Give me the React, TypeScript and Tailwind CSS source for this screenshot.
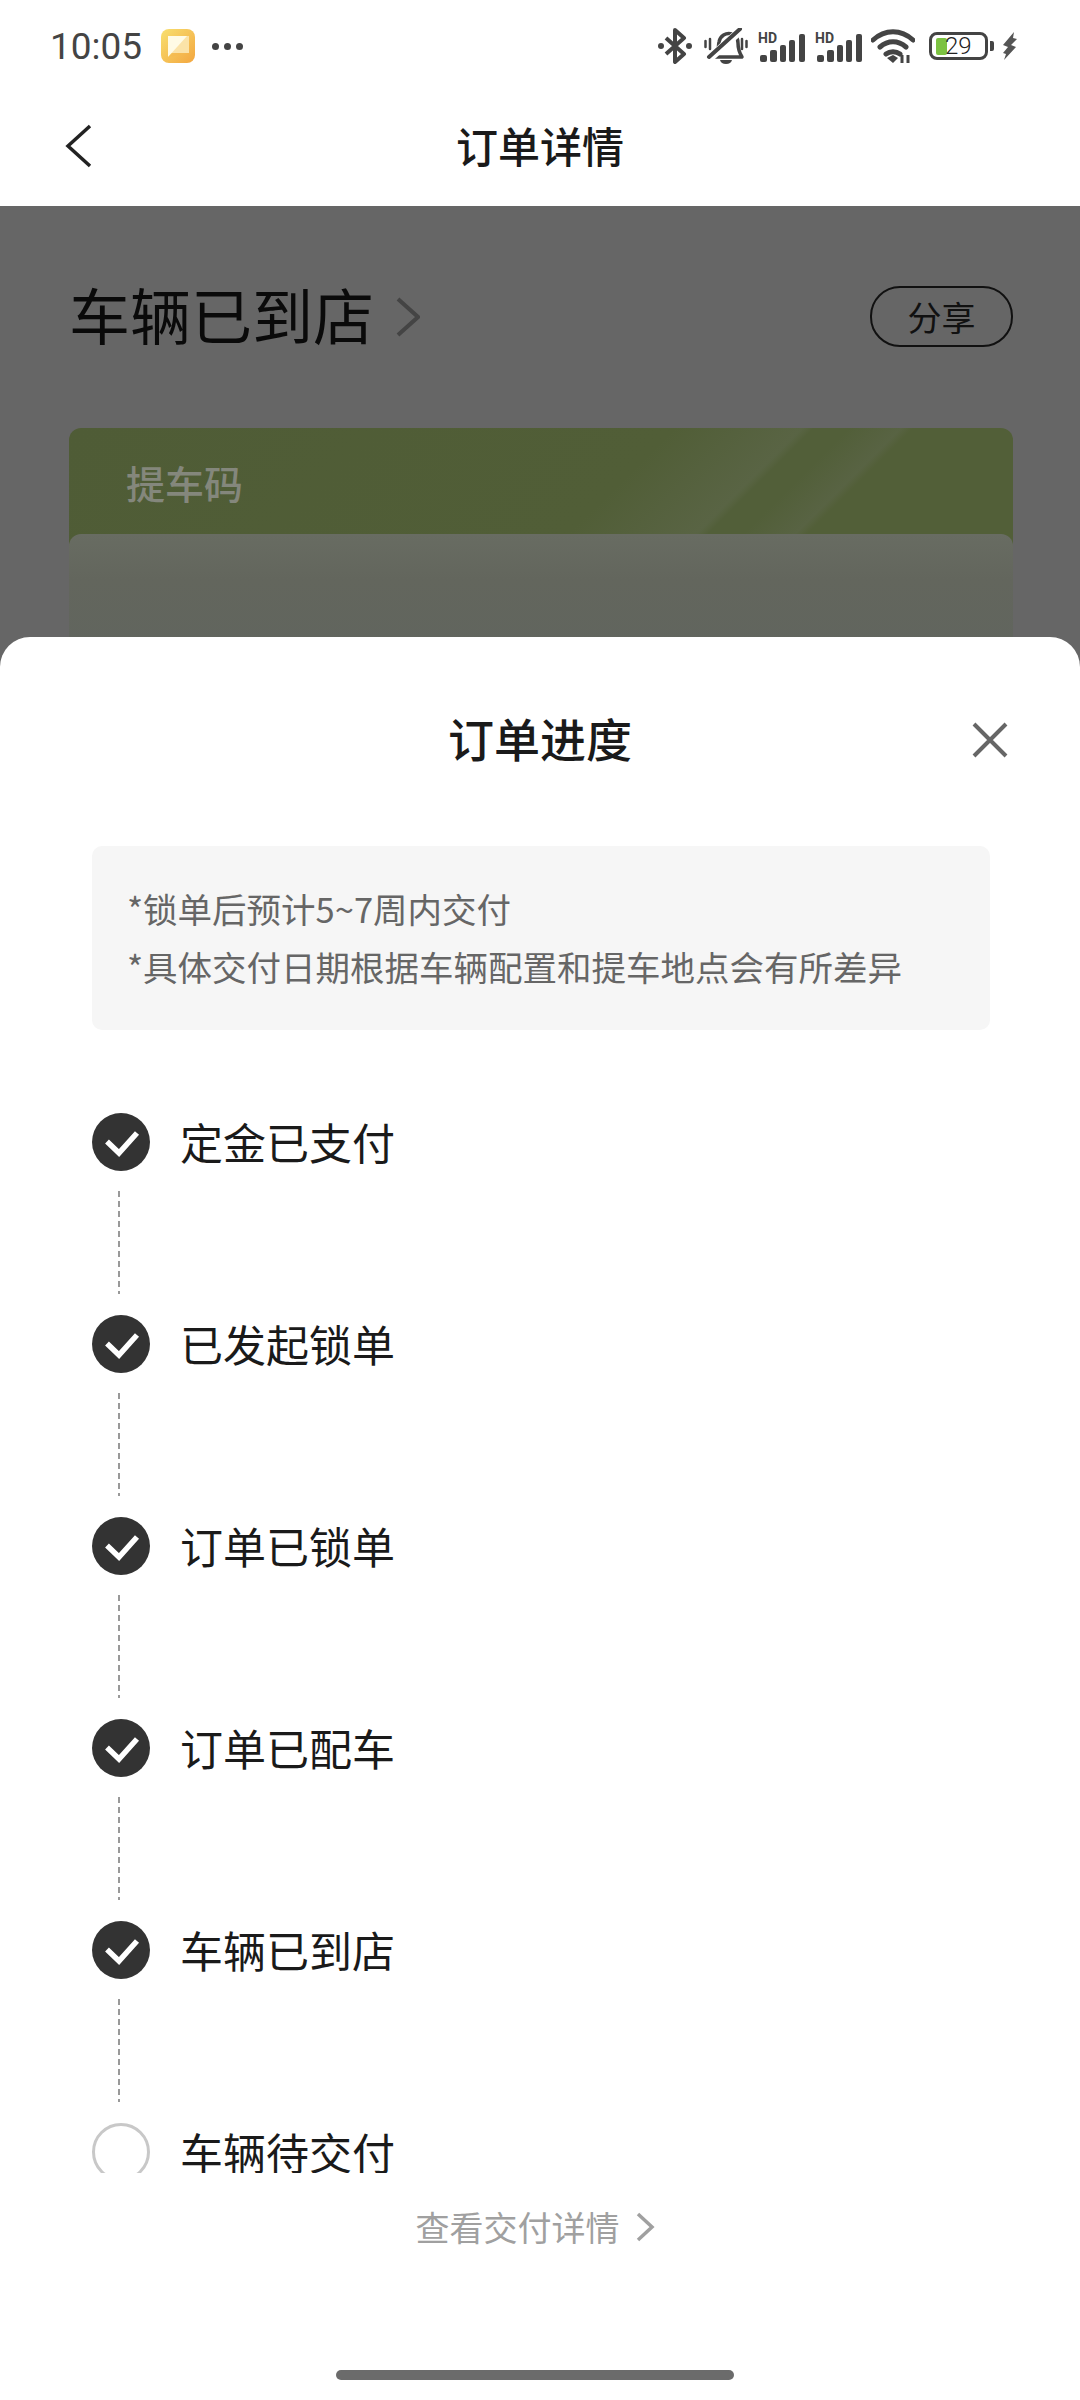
const steps = [
  { label: "定金已支付", done: true },
  { label: "已发起锁单", done: true },
  { label: "订单已锁单", done: true },
  { label: "订单已配车", done: true },
  { label: "车辆已到店", done: true },
  { label: "车辆待交付", done: false },
];

function Signal() {
  return (
    <svg width="48" height="38" viewBox="0 -5 48 38" className="shrink-0">
      <text x="1" y="12" fontSize="14" fontWeight="700" fontFamily="Roboto, sans-serif" fill="#444">HD</text>
      <rect x="3" y="24" width="7" height="7" rx="2" fill="#444" />
      <rect x="13" y="19" width="7" height="12" rx="2" fill="#444" />
      <rect x="23" y="14" width="6" height="17" rx="2" fill="#444" />
      <rect x="32" y="9" width="6" height="22" rx="2" fill="#444" />
      <rect x="42" y="3" width="6" height="28" rx="2" fill="#444" />
    </svg>
  );
}

function StatusBar() {
  return (
    <div className="flex items-center justify-between h-[86px] pt-[6px] pl-[50px] pr-[62px] font-['Roboto',sans-serif] text-[#444]">
      <div className="flex items-center">
        <span className="text-[37px] leading-none w-[111px]">10:05</span>
        <svg width="34" height="34" viewBox="0 0 34 34">
          <defs>
            <linearGradient id="app" x1="0" y1="0" x2="1" y2="1">
              <stop offset="0" stopColor="#f8e070" />
              <stop offset="1" stopColor="#f3a63f" />
            </linearGradient>
          </defs>
          <rect width="34" height="34" rx="8" fill="url(#app)" />
          <path d="M7 7h21v17H7z" fill="#fbe3a8" />
          <path d="M7 7h19L7 28z" fill="#fffbe6" />
          <path d="M28 24H13l-6 4h0z" fill="#f5b950" opacity="0.6" />
        </svg>
        <div className="flex gap-[5px] ml-[17px]">
          <span className="w-[7px] h-[7px] rounded-full bg-[#444]" />
          <span className="w-[7px] h-[7px] rounded-full bg-[#444]" />
          <span className="w-[7px] h-[7px] rounded-full bg-[#444]" />
        </div>
      </div>
      <div className="flex items-center">
        <svg width="36" height="36" viewBox="0 0 36 36" fill="none">
          <path d="M9 10l18 16-9 8V2l9 8L9 26" stroke="#444" strokeWidth="4" strokeLinejoin="round" />
          <circle cx="4" cy="18" r="3" fill="#444" />
          <circle cx="32" cy="18" r="3" fill="#444" />
        </svg>
        <svg width="44" height="36" viewBox="0 0 44 36" fill="none" className="ml-[11px]">
          <path d="M11 29c4-5 3-10 4-15 1-6 7-10 13-8 5 2 6 5 6 9 0 5 1 9 4 14H11z" stroke="#444" strokeWidth="3.500" strokeLinejoin="round" />
          <path d="M6 30L37 2" stroke="#fff" strokeWidth="8" />
          <path d="M5 29L36 1" stroke="#444" strokeWidth="4" strokeLinecap="round" />
          <path d="M16 32h12q-1 4-6 4t-6-4z" fill="#444" />
          <path d="M6 11v10M1.500 13v6M38 11v10M42.500 13v6" stroke="#444" strokeWidth="2.500" strokeLinecap="round" />
        </svg>
        <div className="ml-[9px] mt-[-2px] flex gap-[9px]">
          <Signal />
          <Signal />
        </div>
        <svg width="44" height="34" viewBox="0 0 44 34" fill="none" className="ml-[9px]">
          <path d="M2 11C14 0 30 0 42 11M9 18c8-7 18-7 26 0M15 25c4-3 10-3 14 0" stroke="#444" strokeWidth="5" strokeLinecap="round" />
          <path d="M16 29l6-3 5 3-5 5z" fill="#444" />
          <path d="M31 26v8M37 26v8" stroke="#444" strokeWidth="3" />
        </svg>
        <div className="flex items-center ml-[14px]">
          <div className="flex items-center w-[59px] h-[28px] border-[3px] border-[#444] rounded-[8px] pl-[4px]">
            <span className="w-[11px] h-[17px] bg-[#7cc242] rounded-[2px] shrink-0" />
            <span className="ml-[-2px] text-[24px] leading-[22px] font-light text-[#222]">29</span>
          </div>
          <span className="w-[4px] h-[10px] ml-[2px] rounded-r-[2px] bg-[#444]" />
        </div>
        <svg width="16" height="28" viewBox="0 0 16 28" className="ml-[8px]">
          <path d="M12 0L1 13l5 2-5 6 3 1-2 6 12-13-5-2 6-6-4-1z" fill="#555" />
        </svg>
      </div>
    </div>
  );
}

function NavBar() {
  return (
    <div className="grid grid-cols-[1fr_auto_1fr] items-center h-[120px]">
      <svg width="27" height="44" viewBox="0 0 27 44" fill="none" className="ml-[65px]">
        <path d="M25 2L3 22l22 20" stroke="#222" strokeWidth="3.500" />
      </svg>
      <span className="pb-[2px] text-[42px] leading-none font-medium text-[#1a1a1a]">订单详情</span>
      <span />
    </div>
  );
}

function DimmedPage() {
  return (
    <div className="h-[431px] pl-[69px] pr-[67px] pt-[80px] overflow-hidden">
      <div className="flex items-center justify-between">
        <div className="flex items-center">
          <span className="pb-[6px] text-[61px] leading-[55px] text-[#0a0a0a]">车辆已到店</span>
          <svg width="24" height="40" viewBox="0 0 24 40" fill="none" className="ml-[22px]">
            <path d="M2 2l20 18L2 38" stroke="#444" strokeWidth="4" />
          </svg>
        </div>
        <div className="flex items-center justify-center w-[143px] h-[61px] border-2 border-[#111] rounded-[30px] text-[34px] leading-none text-[#111]">
          分享
        </div>
      </div>
      <div className="mt-[81px] h-[220px] rounded-[12px] overflow-hidden bg-[linear-gradient(135deg,#4f5c36_0%,#515e37_52%,#596444_63%,#525f39_64%,#525f39_67%,#586343_71.5%,#525f38_72.5%,#525f38_100%)]">
        <div className="h-[106px] pl-[57px] pt-[31px] text-[39px] leading-[46px] font-medium text-[#84877c]">提车码</div>
        <div className="h-[114px] rounded-t-[12px] bg-[linear-gradient(180deg,#686c62_0%,#63665d_40%,#61655e_100%)]" />
      </div>
    </div>
  );
}

function Step({ label, done, last }: { label: string; done: boolean; last: boolean }) {
  return (
    <div>
      <div className="flex items-center h-[58px]">
        {done ? (
          <svg width="58" height="58" viewBox="0 0 58 58" className="shrink-0">
            <circle cx="29" cy="29" r="29" fill="#333" />
            <path d="M15 28.500L27 40L45 20" fill="none" stroke="#fff" strokeWidth="5.500" />
          </svg>
        ) : (
          <span className="w-[58px] h-[58px] shrink-0 rounded-full border-[3px] border-[#c8c8c8]" />
        )}
        <span className="ml-[30px] pb-[2px] text-[43px] leading-none text-[#1a1a1a]">{label}</span>
      </div>
      {!last && (
        <div className="h-[144px] pt-[20px] pl-[26px]">
          <div className="w-[2px] h-[103px] bg-[repeating-linear-gradient(180deg,#999_0px,#999_6px,transparent_6px,transparent_10px)]" />
        </div>
      )}
    </div>
  );
}

function ProgressSheet() {
  return (
    <div className="flex flex-col flex-1 bg-white rounded-t-[30px]">
      <div className="grid grid-cols-[1fr_auto_1fr] items-center h-[202px] mb-[7px]">
        <span />
        <span className="pb-[2px] text-[46px] leading-none font-medium text-[#1a1a1a]">订单进度</span>
        <div className="flex justify-end pr-[72px] pt-[3px]">
          <svg width="36" height="36" viewBox="0 0 36 36" fill="none">
            <path d="M2 2l32 32M34 2L2 34" stroke="#666" strokeWidth="4" />
          </svg>
        </div>
      </div>
      <div className="ml-[92px] mr-[90px] pl-[35px] pr-[20px] pt-[33px] pb-[35px] bg-[#f6f6f6] rounded-[10px] text-[34.5px] leading-[58px] text-[#666]">
        <p>*锁单后预计5~7周内交付</p>
        <p>*具体交付日期根据车辆配置和提车地点会有所差异</p>
      </div>
      <div className="h-[1143px] overflow-hidden pt-[83px] pl-[92px]">
        {steps.map((step, i) => (
          <Step key={step.label} label={step.label} done={step.done} last={i === steps.length - 1} />
        ))}
      </div>
      <div className="flex items-center justify-center h-[108px] pr-[10px]">
        <span className="text-[34px] leading-none text-[#a0a0a0]">查看交付详情</span>
        <svg width="19" height="30" viewBox="0 0 19 30" fill="none" className="ml-[16px]">
          <path d="M2 2l14 13L2 28" stroke="#a0a0a0" strokeWidth="3.500" />
        </svg>
      </div>
      <div className="mt-auto mb-[20px] ml-[336px] w-[398px] h-[10px] rounded-full bg-[#6b6b6b]" />
    </div>
  );
}

export default function App() {
  return (
    <div className="flex flex-col w-[1080px] h-[2400px] overflow-hidden bg-[#666] font-['Noto_Sans_CJK_SC','Noto_Sans',sans-serif]">
      <div className="bg-white">
        <StatusBar />
        <NavBar />
      </div>
      <DimmedPage />
      <ProgressSheet />
    </div>
  );
}
